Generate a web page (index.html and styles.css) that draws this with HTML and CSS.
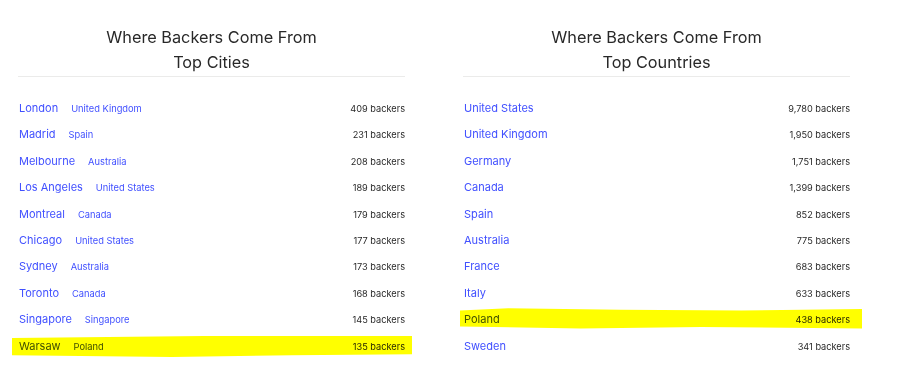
FILE: index.html
```html
<!DOCTYPE html>
<html>
<head>
<meta charset="utf-8">
<link rel="stylesheet" href="styles.css">
</head>
<body>
<div class="page">
  <section class="col">
    <h2 class="title">Where Backers Come From<br>Top Cities</h2>
    <ul class="list">
      <li class="row"><span class="place"><a class="city">London</a><a class="country">United Kingdom</a></span><span class="count">409 backers</span></li>
      <li class="row"><span class="place"><a class="city">Madrid</a><a class="country">Spain</a></span><span class="count">231 backers</span></li>
      <li class="row"><span class="place"><a class="city">Melbourne</a><a class="country">Australia</a></span><span class="count">208 backers</span></li>
      <li class="row"><span class="place"><a class="city">Los Angeles</a><a class="country">United States</a></span><span class="count">189 backers</span></li>
      <li class="row"><span class="place"><a class="city">Montreal</a><a class="country">Canada</a></span><span class="count">179 backers</span></li>
      <li class="row"><span class="place"><a class="city">Chicago</a><a class="country">United States</a></span><span class="count">177 backers</span></li>
      <li class="row"><span class="place"><a class="city">Sydney</a><a class="country">Australia</a></span><span class="count">173 backers</span></li>
      <li class="row"><span class="place"><a class="city">Toronto</a><a class="country">Canada</a></span><span class="count">168 backers</span></li>
      <li class="row"><span class="place"><a class="city">Singapore</a><a class="country">Singapore</a></span><span class="count">145 backers</span></li>
      <li class="row hl hl-left"><span class="place"><a class="city">Warsaw</a><a class="country">Poland</a></span><span class="count">135 backers</span></li>
    </ul>
  </section>
  <section class="col">
    <h2 class="title">Where Backers Come From<br>Top Countries</h2>
    <ul class="list">
      <li class="row"><span class="place"><a class="city">United States</a></span><span class="count">9,780 backers</span></li>
      <li class="row"><span class="place"><a class="city">United Kingdom</a></span><span class="count">1,950 backers</span></li>
      <li class="row"><span class="place"><a class="city">Germany</a></span><span class="count">1,751 backers</span></li>
      <li class="row"><span class="place"><a class="city">Canada</a></span><span class="count">1,399 backers</span></li>
      <li class="row"><span class="place"><a class="city">Spain</a></span><span class="count">852 backers</span></li>
      <li class="row"><span class="place"><a class="city">Australia</a></span><span class="count">775 backers</span></li>
      <li class="row"><span class="place"><a class="city">France</a></span><span class="count">683 backers</span></li>
      <li class="row"><span class="place"><a class="city">Italy</a></span><span class="count">633 backers</span></li>
      <li class="row hl hl-right"><span class="place"><a class="city">Poland</a></span><span class="count">438 backers</span></li>
      <li class="row"><span class="place"><a class="city">Sweden</a></span><span class="count">341 backers</span></li>
    </ul>
  </section>
</div>
</body>
</html>
```
FILE: styles.css
```css
html, body {
  margin: 0;
  padding: 0;
  background: #fff;
}
body {
  font-family: Inter, "Liberation Sans", sans-serif;
  color: #282828;
}
.page {
  display: flex;
  gap: 58px;
  padding: 25px 0 0 18px;
}
.col {
  width: 387px;
}
.title {
  margin: 0;
  font-size: 16.3px;
  font-weight: 400;
  line-height: 25px;
  text-align: center;
  color: #282828;
  padding-bottom: 1px;
  border-bottom: 1px solid #ebebea;
}
.list {
  list-style: none;
  margin: 0;
  padding: 18px 0 0 1px;
}
.row {
  position: relative;
  display: flex;
  justify-content: space-between;
  align-items: baseline;
  height: 26.4px;
  line-height: 26.4px;
}
.place {
  display: flex;
  align-items: baseline;
  gap: 13px;
}
.city {
  font-size: 11px;
  color: #4150ff;
}
.country {
  font-size: 9.3px;
  color: #4150ff;
}
.count {
  font-size: 9.2px;
  color: #282828;
}
.hl::after {
  content: "";
  position: absolute;
  z-index: 1;
  background: #ffff00;
  mix-blend-mode: multiply;
  pointer-events: none;
}
.hl-left::after {
  left: -7px;
  right: -7px;
  top: 3px;
  bottom: 2px;
  clip-path: polygon(0 12%, 30% 6%, 60% 0, 100% 0, 100% 88%, 70% 92%, 40% 100%, 0 92%);
}
.hl-right::after {
  left: -4px;
  right: -12px;
  top: 2px;
  bottom: 4px;
  clip-path: polygon(0 12%, 12% 0, 40% 8%, 70% 12%, 100% 4%, 100% 100%, 60% 92%, 30% 100%, 0 90%);
}
```
